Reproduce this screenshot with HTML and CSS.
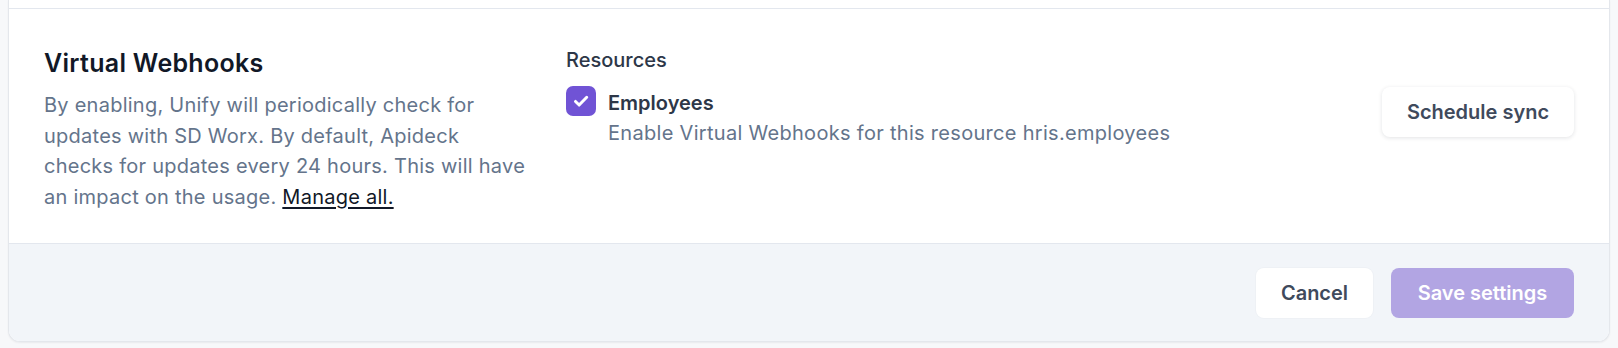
FILE: index.html
```html
<!DOCTYPE html>
<html lang="en">
<head>
<meta charset="utf-8">
<title>Virtual Webhooks</title>
<link rel="stylesheet" href="styles.css">
</head>
<body>
<div class="wrap">
  <div class="card">
    <div class="prev"></div>
    <div class="section">
      <div class="intro">
        <h2 class="title">Virtual Webhooks</h2>
        <p class="desc">By enabling, Unify will periodically check for updates with SD Worx. By default, Apideck checks for updates every 24 hours. This will have an impact on the usage. <a class="link" href="#">Manage all.</a></p>
      </div>
      <div class="resources">
        <div class="res-label">Resources</div>
        <div class="res-item">
          <span class="checkbox">
            <svg viewBox="0 0 20 20" width="22" height="22" aria-hidden="true"><path d="M5 10.4l3.3 3.3L15.2 6.6" fill="none" stroke="#fff" stroke-width="2.7" stroke-linecap="round" stroke-linejoin="round"/></svg>
          </span>
          <div class="res-text">
            <div class="res-name">Employees</div>
            <div class="res-desc">Enable Virtual Webhooks for this resource hris.employees</div>
          </div>
        </div>
      </div>
      <div class="actions">
        <button class="btn btn-white btn-sync">Schedule sync</button>
      </div>
    </div>
    <div class="footer">
      <button class="btn btn-white btn-cancel">Cancel</button>
      <button class="btn btn-primary" disabled>Save settings</button>
    </div>
  </div>
</div>
</body>
</html>
```
FILE: styles.css
```css
* { box-sizing: border-box; }
html, body { margin: 0; padding: 0; }
body {
  background: #f7f8fa;
  font-family: Inter, "Noto Sans", "Liberation Sans", sans-serif;
  -webkit-font-smoothing: antialiased;
}
.wrap {
  padding: 0 8px 5px;
}
.card {
  background: #fff;
  border: 1px solid #e4e7ec;
  border-top: none;
  border-radius: 0 0 12px 12px;
  box-shadow: 0 1px 2px rgba(16, 24, 40, 0.06);
  overflow: hidden;
}
.prev {
  height: 9px;
  border-bottom: 1px solid #e3e7ee;
}
.section {
  display: flex;
  align-items: flex-start;
  padding: 38px 35px 0;
  height: 235px;
  border-bottom: 1px solid #e3e7ee;
}
.intro {
  width: 486px;
  flex: none;
}
.title {
  margin: 0;
  font-size: 25px;
  line-height: 32px;
  font-weight: 600;
  color: #111827;
  letter-spacing: 0.3px;
}
.desc {
  margin: 11px 0 0;
  font-size: 20px;
  line-height: 30.5px;
  color: #64748b;
  letter-spacing: 0.25px;
}
.link {
  color: #111827;
  text-decoration: underline;
  text-underline-offset: 3px;
}
.resources {
  margin-left: 36px;
  flex: 1;
  padding-top: 1px;
}
.res-label {
  font-size: 20px;
  line-height: 24px;
  font-weight: 500;
  color: #2d3748;
}
.res-item {
  display: flex;
  align-items: flex-start;
  gap: 12px;
  margin-top: 14px;
}
.checkbox {
  width: 30px;
  height: 30px;
  border-radius: 7px;
  background: #7053d5;
  display: flex;
  align-items: center;
  justify-content: center;
  flex: none;
  margin-top: 0;
}
.res-text {
  padding-top: 2px;
}
.res-name {
  font-size: 20px;
  line-height: 30px;
  font-weight: 600;
  color: #2d3748;
}
.res-desc {
  font-size: 20px;
  line-height: 30px;
  color: #64748b;
  letter-spacing: 0.3px;
}
.actions {
  flex: none;
  padding-top: 40px;
}
.btn {
  font-family: inherit;
  font-size: 20px;
  font-weight: 600;
  height: 50px;
  border-radius: 8px;
  border: none;
  padding: 0;
  cursor: pointer;
}
.btn-white {
  background: #fff;
  color: #3f4a5c;
}
.btn-sync {
  width: 192px;
  box-shadow: 0 1px 4px rgba(16, 24, 40, 0.12);
}
.btn-cancel {
  width: 117px;
  box-shadow: 0 0 0 1px #eef1f5;
}
.btn-primary {
  background: #b2a5e3;
  color: #fff;
  width: 183px;
}
.footer {
  background: #f2f5f9;
  display: flex;
  justify-content: flex-end;
  gap: 18px;
  padding: 24px 35px 23px;
}
```
